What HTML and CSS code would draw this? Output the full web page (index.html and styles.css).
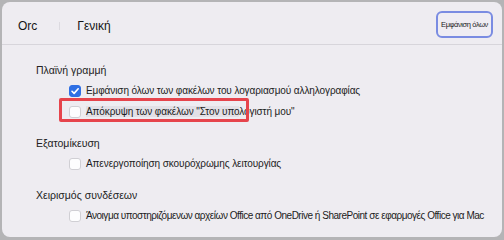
FILE: index.html
```html
<!DOCTYPE html>
<html lang="el">
<head>
<meta charset="utf-8">
<link rel="stylesheet" href="styles.css">
</head>
<body>
<div class="window">
  <div class="header">
    <div class="tabs">
      <span class="tab">Orc</span>
      <span class="tab-sep"></span>
      <span class="tab">Γενική</span>
    </div>
    <button class="show-all">Εμφάνιση όλων</button>
  </div>
  <div class="content">
    <div class="section">
      <div class="section-title">Πλαϊνή γραμμή</div>
      <div class="row">
        <span class="check checked"><svg viewBox="0 0 12 12" width="12" height="12"><path d="M3 6.3 L5.1 8.4 L9.2 3.8" fill="none" stroke="#fff" stroke-width="1.6" stroke-linecap="round" stroke-linejoin="round"/></svg></span>
        <span class="label">Εμφάνιση όλων των φακέλων του λογαριασμού αλληλογραφίας</span>
      </div>
      <div class="row highlighted">
        <span class="check"></span>
        <span class="label"><span class="sel">Απόκρυψη των φακέλων "Στον υπο</span>λογιστή μου"</span>
        <span class="annot"></span>
      </div>
    </div>
    <div class="section">
      <div class="section-title">Εξατομίκευση</div>
      <div class="row">
        <span class="check"></span>
        <span class="label">Απενεργοποίηση σκουρόχρωμης λειτουργίας</span>
      </div>
    </div>
    <div class="section">
      <div class="section-title">Χειρισμός συνδέσεων</div>
      <div class="row">
        <span class="check"></span>
        <span class="label small">Άνοιγμα υποστηριζόμενων αρχείων Office από OneDrive ή SharePoint σε εφαρμογές Office για Mac</span>
      </div>
    </div>
  </div>
</div>
</body>
</html>
```
FILE: styles.css
```css
* { box-sizing: border-box; }
html, body { margin: 0; padding: 0; }
body {
  width: 504px;
  height: 240px;
  background: #b4b4b6;
  padding: 2px 2px 3px 2px;
  font-family: "Liberation Sans", Arial, sans-serif;
  color: #1f1f24;
  overflow: hidden;
}
.window {
  height: 235px;
  background: #eeecf1;
  border-radius: 8px;
  display: flex;
  flex-direction: column;
}
.header {
  height: 43px;
  flex: 0 0 43px;
  border-bottom: 1px solid #d7d5db;
  display: flex;
  align-items: center;
  justify-content: space-between;
  padding: 0 9px 0 16px;
}
.tabs {
  display: flex;
  align-items: center;
  padding-top: 6px;
}
.tab {
  font-size: 12px;
  line-height: 16px;
  color: #151515;
}
.tab-sep {
  width: 1px;
  height: 8px;
  background: #dcdae0;
  margin: 0 17px 0 22px;
}
.show-all {
  font-family: inherit;
  font-size: 7.5px;
  color: #1a1a22;
  background: #efedf3;
  border: 2.5px solid #7a8ce2;
  border-radius: 6px;
  height: 27px;
  width: 57px;
  padding: 0;
  margin-top: 2px;
  white-space: nowrap;
  letter-spacing: -0.4px;
}
.content {
  padding: 17px 0 0 34px;
  display: flex;
  flex-direction: column;
  gap: 13px;
}
.section-title {
  font-size: 10.5px;
  line-height: 16px;
  margin-bottom: 2px;
  color: #222;
}
.row {
  position: relative;
  height: 21px;
  display: flex;
  align-items: center;
  padding-left: 33px;
}
.check {
  width: 12px;
  height: 12px;
  border-radius: 3px;
  background: #fdfdfe;
  border: 1px solid #d0cfd4;
  flex: 0 0 12px;
  margin-right: 5px;
  display: flex;
}
.check.checked {
  background: #2f6fe4;
  border-color: #2f6fe4;
}
.check.checked svg { margin: -1px; }
.label {
  font-size: 10px;
  line-height: 14px;
  letter-spacing: -0.1px;
  white-space: nowrap;
  color: #1c1c22;
}
.label.small {
  font-size: 10px;
  letter-spacing: -0.48px;
}
.sel { background: #e2e0e6; }
.annot {
  position: absolute;
  left: 23px;
  top: -3px;
  width: 190px;
  height: 24px;
  border: 3px solid #e6444c;
  border-radius: 2px;
}
```
